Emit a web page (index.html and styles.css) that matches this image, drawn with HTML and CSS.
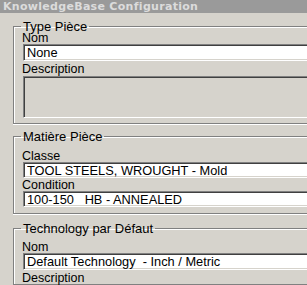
FILE: index.html
```html
<!DOCTYPE html>
<html lang="fr">
<head>
    <meta charset="UTF-8">
    <title>KnowledgeBase Configuration</title>
    <link rel="stylesheet" href="styles.css">
</head>
<body>
    <div class="titlebar">KnowledgeBase Configuration</div>
    <div class="content">
        <div class="group group-type">
            <div class="legend">Type Pièce</div>
            <div class="label first">Nom</div>
            <input type="text" class="field" value="None" readonly>
            <div class="label">Description</div>
            <div class="memo"></div>
        </div>

        <div class="group group-matiere">
            <div class="legend">Matière Pièce</div>
            <div class="label first">Classe</div>
            <input type="text" class="field small" value="TOOL STEELS, WROUGHT - Mold" readonly>
            <div class="label">Condition</div>
            <input type="text" class="field small" value="100-150   HB - ANNEALED" readonly>
        </div>

        <div class="group group-tech">
            <div class="legend">Technology par Défaut</div>
            <div class="label first">Nom</div>
            <input type="text" class="field" value="Default Technology  - Inch / Metric" readonly>
            <div class="label">Description</div>
        </div>
    </div>
</body>
</html>
```
FILE: styles.css
```css
html, body {
    margin: 0;
    height: 100%;
    overflow: hidden;
}
body {
    background-color: #d6d3cc;
    font-family: 'Liberation Sans', Arial, sans-serif;
    font-size: 12.5px;
    color: #000;
}
.titlebar {
    height: 13px;
    line-height: 13px;
    padding-left: 3px;
    background-color: #9a9a9a;
    color: #dcdcdc;
    font-family: 'DejaVu Sans', Verdana, sans-serif;
    font-weight: bold;
    font-size: 11px;
    letter-spacing: 0.3px;
    white-space: nowrap;
}
.content {
    padding: 13px 0 0 13px;
}
.group {
    width: 400px;
    border: 1px solid #808080;
    border-right: none;
    box-shadow: inset 1px 1px 0 #fff, 0 1px 0 #fff;
}
.group-type {
    padding-bottom: 5px;
}
.group-matiere {
    margin-top: 12px;
    padding-bottom: 6px;
}
.group-tech {
    margin-top: 14px;
}
.legend {
    width: fit-content;
    height: 6px;
    margin: -6px 0 0 7px;
    padding: 0 2px;
    line-height: 12px;
    font-size: 13px;
    background-color: #d6d3cc;
    white-space: nowrap;
}
.label {
    line-height: 11px;
    padding-left: 8px;
    margin-top: 3px;
    white-space: nowrap;
}
.group-type .label.first {
    margin-top: 6px;
}
.group-matiere .label.first {
    margin-top: 14px;
}
.group-tech .label.first {
    margin-top: 13px;
}
.group-matiere .label {
    margin-top: 2px;
}
.field {
    display: block;
    box-sizing: border-box;
    width: 300px;
    height: 17px;
    margin: 0 0 0 9px;
    padding: 0 3px;
    border: 1px solid;
    border-color: #808080 #fff #fff #808080;
    box-shadow: inset 1px 1px 0 #404040, inset -1px -1px 0 #d6d3cc;
    background-color: #fff;
    font-family: 'Liberation Sans', Arial, sans-serif;
    font-size: 12.8px;
    color: #000;
    outline: none;
    white-space: pre;
}
.field.small {
    height: 16px;
}
.memo {
    box-sizing: border-box;
    width: 300px;
    height: 42px;
    margin: 1px 0 0 9px;
    border: 1px solid;
    border-color: #808080 #fff #fff #808080;
    box-shadow: inset 1px 1px 0 #404040, inset -1px -1px 0 #d6d3cc;
}
```
